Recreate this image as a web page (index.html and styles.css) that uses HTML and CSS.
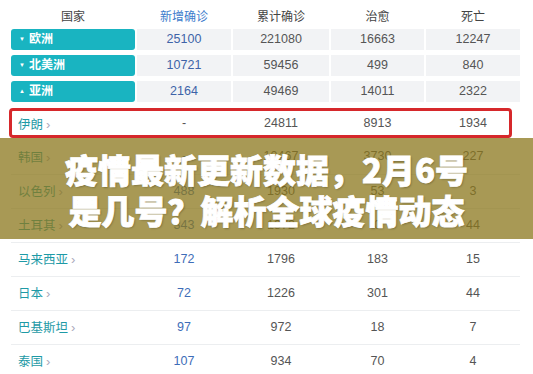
FILE: index.html
```html
<!DOCTYPE html>
<html lang="zh-CN">
<head>
<meta charset="utf-8">
<link rel="stylesheet" href="styles.css">
</head>
<body>
<div class="page">
  <div class="table">
    <div class="row head">
      <div>国家</div>
      <div class="blue">新增确诊</div>
      <div>累计确诊</div>
      <div>治愈</div>
      <div>死亡</div>
    </div>
    <div class="row cont">
      <div class="tag"><span class="tri">▼</span>欧洲</div>
      <div class="cell blue">25100</div>
      <div class="cell">221080</div>
      <div class="cell">16663</div>
      <div class="cell">12247</div>
    </div>
    <div class="row cont">
      <div class="tag"><span class="tri">▼</span>北美洲</div>
      <div class="cell blue">10721</div>
      <div class="cell">59456</div>
      <div class="cell">499</div>
      <div class="cell">840</div>
    </div>
    <div class="row cont">
      <div class="tag"><span class="tri">▲</span>亚洲</div>
      <div class="cell blue">2164</div>
      <div class="cell">49469</div>
      <div class="cell">14011</div>
      <div class="cell">2322</div>
    </div>
    <div class="row country hl">
      <div class="name">伊朗<span class="chev">›</span></div>
      <div class="num">-</div>
      <div class="num">24811</div>
      <div class="num">8913</div>
      <div class="num">1934</div>
    </div>
    <div class="row country">
      <div class="name">韩国<span class="chev">›</span></div>
      <div class="num blue">-</div>
      <div class="num">10467</div>
      <div class="num">3730</div>
      <div class="num">227</div>
    </div>
    <div class="row country">
      <div class="name">以色列<span class="chev">›</span></div>
      <div class="num blue">488</div>
      <div class="num">1930</div>
      <div class="num">53</div>
      <div class="num">3</div>
    </div>
    <div class="row country">
      <div class="name">土耳其<span class="chev">›</span></div>
      <div class="num blue">343</div>
      <div class="num">1872</div>
      <div class="num">0</div>
      <div class="num">44</div>
    </div>
    <div class="row country">
      <div class="name">马来西亚<span class="chev">›</span></div>
      <div class="num blue">172</div>
      <div class="num">1796</div>
      <div class="num">183</div>
      <div class="num">15</div>
    </div>
    <div class="row country">
      <div class="name">日本<span class="chev">›</span></div>
      <div class="num blue">72</div>
      <div class="num">1226</div>
      <div class="num">301</div>
      <div class="num">44</div>
    </div>
    <div class="row country">
      <div class="name">巴基斯坦<span class="chev">›</span></div>
      <div class="num blue">97</div>
      <div class="num">972</div>
      <div class="num">18</div>
      <div class="num">7</div>
    </div>
    <div class="row country">
      <div class="name">泰国<span class="chev">›</span></div>
      <div class="num blue">107</div>
      <div class="num">934</div>
      <div class="num">70</div>
      <div class="num">4</div>
    </div>
  </div>
  <div class="banner">
    <div class="line">疫情最新更新数据，2月6号</div>
    <div class="line">是几号？解析全球疫情动态</div>
  </div>
</div>
</body>
</html>
```

FILE: styles.css
```css
* { box-sizing: border-box; }
html, body {
  margin: 0;
  padding: 0;
  background: #fff;
}
body {
  font-family: "Liberation Sans", "Noto Sans CJK SC", sans-serif;
  font-size: 12px;
  color: #555;
  width: 533px;
  height: 374px;
  overflow: hidden;
}
.page {
  position: relative;
  width: 533px;
  height: 374px;
}
.table {
  padding: 0 13px 0 11px;
  display: flex;
  flex-direction: column;
}
.row {
  display: grid;
  grid-template-columns: 124px 94px 96px 93px 94px;
  column-gap: 2px;
}
.head {
  height: 29px;
  padding-top: 8px;
  line-height: 18px;
  color: #444;
  text-align: center;
  font-size: 12px;
}
.blue { color: #3e6db8; }
.head .blue { color: #3d7ccc; }
.cont {
  height: 21px;
  line-height: 21px;
  margin-bottom: 5px;
}
.tag {
  background: #19b4c1;
  color: #fff;
  font-weight: bold;
  border-radius: 3px;
  padding-left: 8px;
  font-size: 12px;
}
.tri {
  display: inline-block;
  font-size: 6px;
  width: 10px;
  vertical-align: 2px;
}
.cell {
  background: #f2f3f5;
  text-align: center;
  font-size: 12.5px;
}
.cont .cell.blue { color: #3e63a8; }
.country {
  height: 34px;
  border-top: 1px solid #eceef0;
  padding-bottom: 2px;
  align-items: center;
  position: relative;
}
.name {
  color: #1e9aa6;
  padding-left: 7px;
  font-size: 12.5px;
}
.chev {
  color: #aab;
  font-size: 13px;
  margin-left: 3px;
}
.num {
  text-align: center;
  font-size: 12.5px;
}
.hl {
  margin-top: 1px;
  height: 30px;
  border-top: none;
  padding-bottom: 0;
  margin-bottom: 2px;
}
.hl::after {
  content: "";
  position: absolute;
  left: -2px;
  right: 8px;
  top: 0;
  bottom: 0;
  border: 3px solid #d6282b;
  border-radius: 4px;
}
.hl + .country { border-top: none; }
.banner {
  position: absolute;
  left: 0;
  right: 0;
  top: 138px;
  height: 101px;
  background: rgba(139, 119, 28, 0.75);
  padding-top: 11px;
  text-align: center;
  color: #fff;
  font-family: "Noto Sans CJK SC", sans-serif;
  font-weight: 900;
  font-size: 33px;
  line-height: 41px;
  -webkit-text-stroke: 0.8px #fff;
  text-shadow: 1px 1px 2px rgba(0, 0, 0, 0.3);
}
.line { white-space: nowrap; }
```
